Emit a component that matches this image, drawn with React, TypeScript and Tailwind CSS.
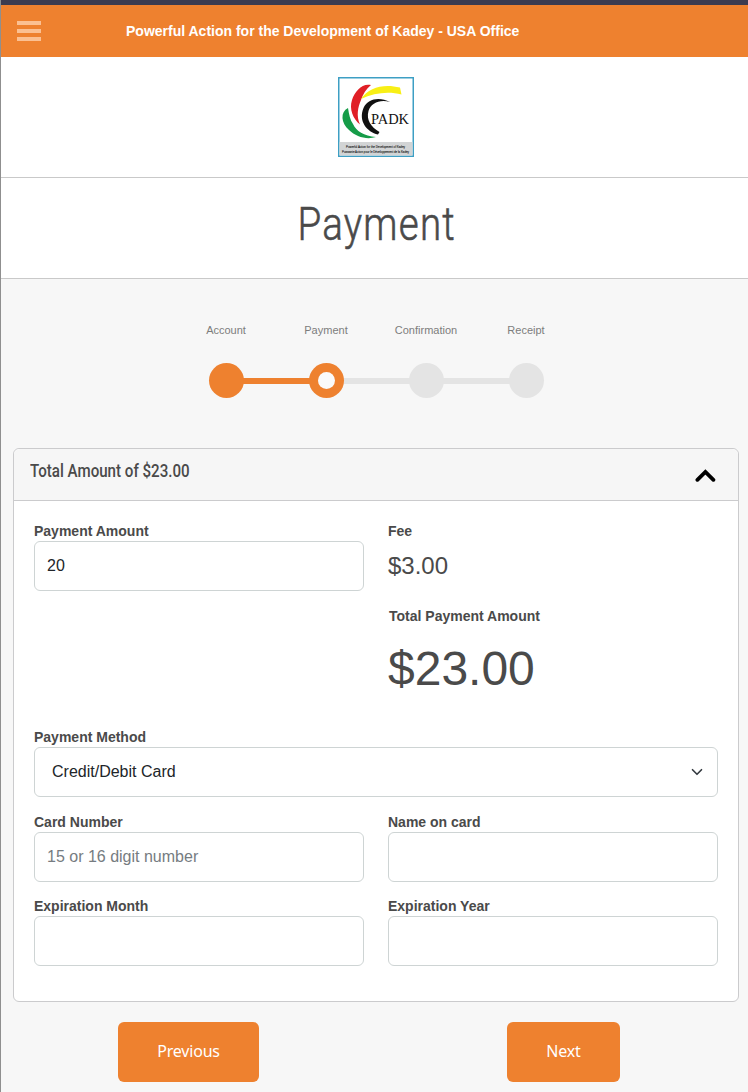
import React, { useState } from 'react';

type StepState = 'done' | 'current' | 'upcoming';

interface Step {
  label: string;
  state: StepState;
}

const steps: Step[] = [
  { label: 'Account', state: 'done' },
  { label: 'Payment', state: 'current' },
  { label: 'Confirmation', state: 'upcoming' },
  { label: 'Receipt', state: 'upcoming' },
];

const Logo: React.FC = () => (
  <svg className="overflow-visible" width="76" height="80" viewBox="0 0 76 80" aria-label="PADK">
    <rect x="0.75" y="0.75" width="74.5" height="78.5" fill="#fff" stroke="#3d9fc4" strokeWidth="1.5" />
    <path d="M10 31C2 35 3 46 11 53C18 60 29 63 38 60C26 59 18 54 15 47C12 43 11 37 10 31Z" fill="#169c48" />
    <path d="M33 8C24 6 17 14 14 23C11 32 15 42 22 47.5C18 39 20 30 23 23C25 17 28 12 33 8Z" fill="#e01f26" />
    <path d="M23 22C31 10 46 6.5 62 10.5L63.5 17.5C50 14 36 16 23 22Z" fill="#f8ef16" />
    <path d="M52 25C42 20 30 21 25.5 31C20 44 29 55 40 57.5L41.5 55C33 50 28 43 30.5 34C33 26 42 22 52 25Z" fill="#111" />
    <text x="33" y="46.8" fontSize="15.5" textLength="38" lengthAdjust="spacingAndGlyphs" fill="#111" fontFamily="Liberation Serif, serif">PADK</text>
    <rect x="1.5" y="65" width="73" height="13.5" fill="#d2d4d5" />
    <text x="8" y="71" fontSize="4" textLength="59" lengthAdjust="spacingAndGlyphs" fill="#111" stroke="#111" strokeWidth="0.1" fontFamily="Liberation Sans, sans-serif">Powerful Action for the Development of Kadey</text>
    <text x="4" y="75.6" fontSize="4" textLength="67" lengthAdjust="spacingAndGlyphs" fill="#111" stroke="#111" strokeWidth="0.1" fontFamily="Liberation Sans, sans-serif">Puissante Action pour le Développement de la Kadey</text>
  </svg>
);

const Header: React.FC = () => (
  <header className="flex h-[57px] items-center border-t-5 border-[#3b3b50] bg-[#ee812f] pl-4">
    <button className="flex w-6 flex-col gap-1" aria-label="Menu">
      <span className="h-1 bg-[#fbc092]" />
      <span className="h-1 bg-[#fbc092]" />
      <span className="h-1 bg-[#fbc092]" />
    </button>
    <span className="ml-[85px] text-sm font-bold whitespace-nowrap text-white">
      Powerful Action for the Development of Kadey - USA Office
    </span>
  </header>
);

const Stepper: React.FC = () => (
  <div className="flex flex-col pt-[43px] pl-[175px]">
    <div className="flex">
      {steps.map(step => (
        <span key={step.label} className="w-[100px] text-center text-[11px] leading-4 text-[#7d7d7d]">{step.label}</span>
      ))}
    </div>
    <div className="mt-[25px] flex items-center pl-[33px]">
      {steps.map((step, i) => (
        <React.Fragment key={step.label}>
          {i > 0 && (
            <span className={`h-1.5 w-[67px] -mx-px ${step.state === 'upcoming' ? 'bg-[#e4e4e4]' : 'bg-[#ee812f]'}`} />
          )}
          <span className={`z-10 flex size-[35px] items-center justify-center rounded-full ${step.state === 'upcoming' ? 'bg-[#e4e4e4]' : 'bg-[#ee812f]'}`}>
            {step.state === 'current' && <span className="size-[17px] rounded-full bg-[#fafafa]" />}
          </span>
        </React.Fragment>
      ))}
    </div>
  </div>
);

interface FieldProps {
  label: string;
  placeholder?: string;
  defaultValue?: string;
}

const Field: React.FC<FieldProps> = ({ label, placeholder, defaultValue }) => (
  <label className="block">
    <span className="block text-sm leading-5 font-bold">{label}</span>
    <input
      className="block h-[50px] w-full rounded-md border border-[#ced4d4] bg-white px-3 text-base text-[#212529] placeholder:text-[#767c81]"
      placeholder={placeholder}
      defaultValue={defaultValue}
    />
  </label>
);

export default function App() {
  const [open, setOpen] = useState(true);

  return (
    <div className="h-[1092px] overflow-hidden border-l border-[#8f8f8f] bg-[#f7f7f7] font-['Liberation_Sans',Arial,sans-serif] text-[#4a4a4a]">
      <Header />
      <div className="flex h-[121px] items-center justify-center border-b border-[#c9c9c9] bg-white pl-[3px]">
        <Logo />
      </div>
      <div className="flex h-[101px] justify-center border-b border-[#c9c9c9] bg-white pt-4 pl-[5px]">
        <h1 className="origin-center scale-x-[0.82] font-['Roboto',sans-serif] text-[47px] leading-[59px] font-light tracking-[1.5px] [-webkit-text-stroke:0.6px_#4a4a4a]">Payment</h1>
      </div>

      <Stepper />

      <section className="mt-[50px] mr-[9px] ml-3 h-[554px] rounded-md border border-[#cbcbcd] bg-white">
        <div className="flex h-[52px] items-start justify-between rounded-t-md border-b border-[#cbcbcd] bg-[#f6f6f6] pl-4">
          <h2 className="mt-2 origin-left scale-x-[0.84] font-['Roboto',sans-serif] text-[18px] leading-7 font-medium">Total Amount of $23.00</h2>
          <button className="mt-5 mr-[22px]" onClick={() => setOpen(!open)} aria-label="Toggle details">
            <svg width="22" height="14" viewBox="0 0 22 14" fill="none" stroke="#000" strokeWidth="3.8" strokeLinecap="round">
              <path d="M3.4 10.8L11.4 3L19.4 10.8" />
            </svg>
          </button>
        </div>
        {open && (
          <div className="px-5 pt-5">
            <div className="grid h-[206px] grid-cols-2 gap-x-6">
              <Field label="Payment Amount" defaultValue="20" />
              <div>
                <p className="text-sm leading-5 font-bold">Fee</p>
                <p className="mt-2.5 text-2xl leading-[29px]">$3.00</p>
                <p className="mt-[26px] pl-px text-sm leading-5 font-bold">Total Payment Amount</p>
                <p className="mt-3.5 text-[48px] leading-[58px]">$23.00</p>
              </div>
            </div>
            <div className="text-sm leading-5 font-bold">Payment Method</div>
            <div className="flex h-[50px] items-center justify-between rounded-md border border-[#ced4d4] bg-white pr-3.5 pl-[17px] text-base text-[#212529]">
              <span>Credit/Debit Card</span>
              <svg width="12" height="12" viewBox="0 0 16 16" fill="none" stroke="#343a40" strokeWidth="2.2" strokeLinecap="round" strokeLinejoin="round">
                <path d="M2 5l6 6 6-6" />
              </svg>
            </div>
            <div className="mt-[15px] grid grid-cols-2 gap-x-6 gap-y-3.5">
              <Field label="Card Number" placeholder="15 or 16 digit number" />
              <Field label="Name on card" />
              <Field label="Expiration Month" />
              <Field label="Expiration Year" />
            </div>
          </div>
        )}
      </section>

      <div className="mt-5 flex justify-between pr-32 pl-[117px] font-['Noto_Sans',sans-serif] text-base tracking-[-0.2px] text-white">
        <button className="h-[60px] w-[141px] rounded-md bg-[#ee812f] pb-0.5">Previous</button>
        <button className="h-[60px] w-[113px] rounded-md bg-[#ee812f] pb-0.5">Next</button>
      </div>
    </div>
  );
}
